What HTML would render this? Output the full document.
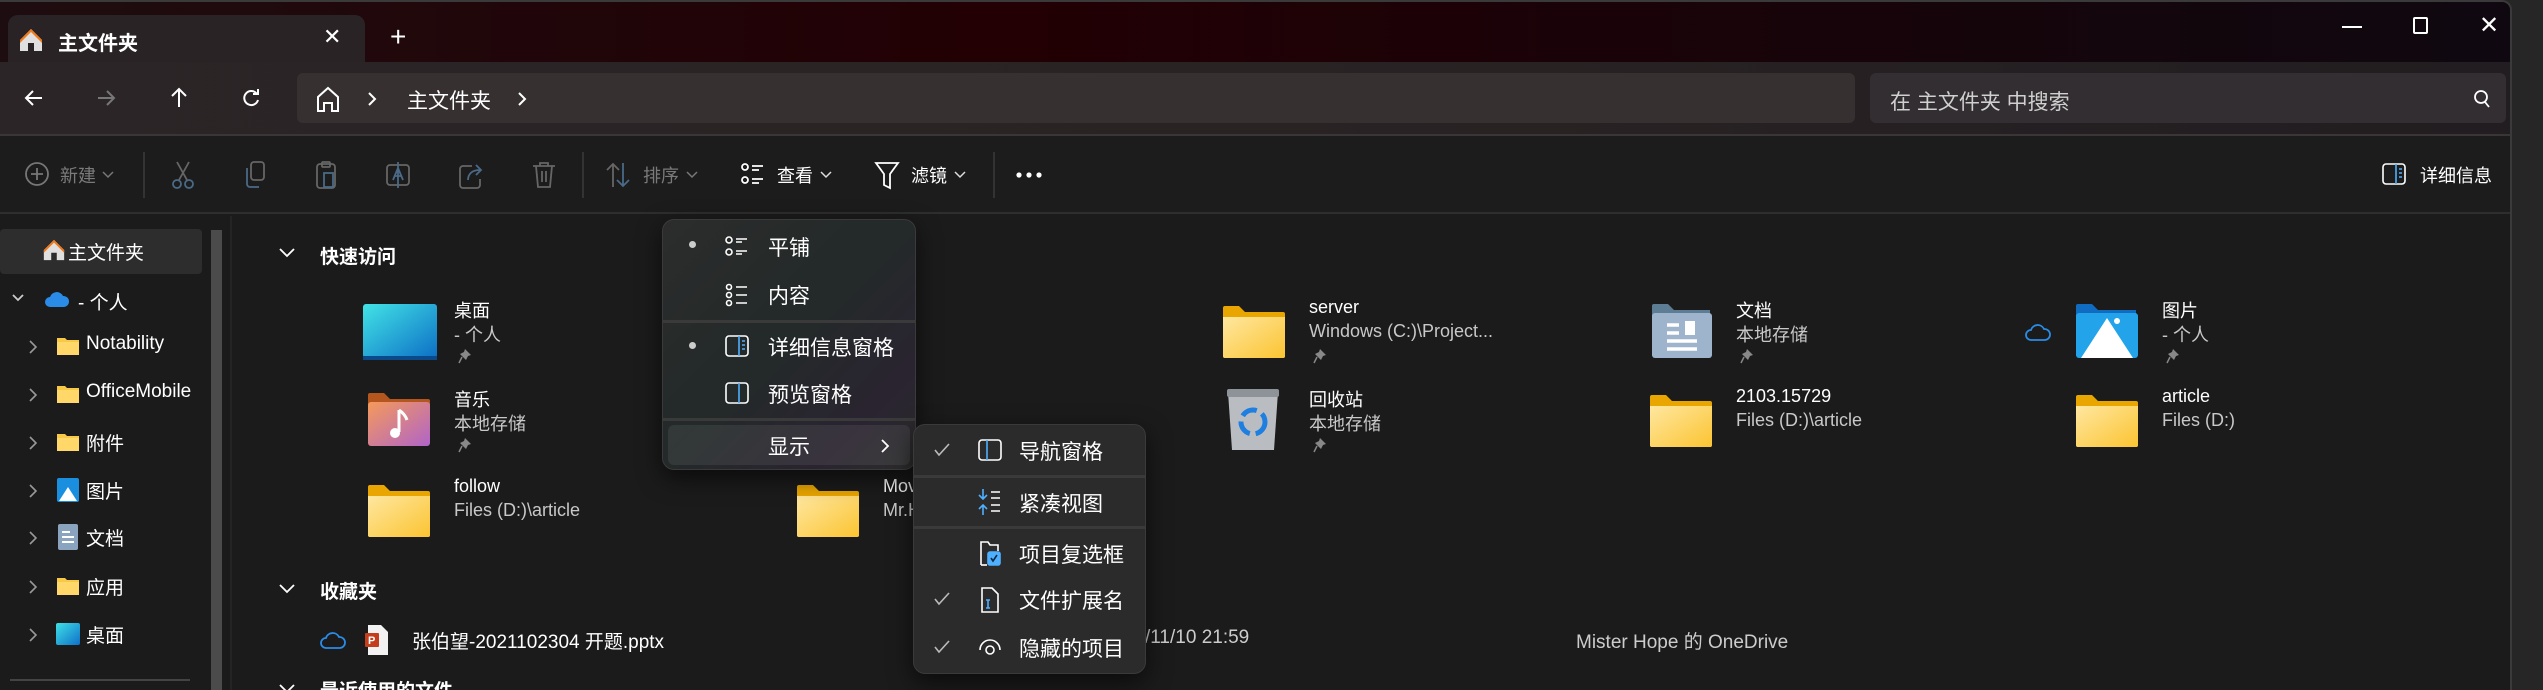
<!DOCTYPE html>
<html><head><meta charset="utf-8"><style>
*{margin:0;padding:0;box-sizing:border-box}
body{width:2543px;height:690px;overflow:hidden;background:#262626;font-family:"Liberation Sans","Noto Sans CJK SC",sans-serif;color:#fff;position:relative}
.a{position:absolute;white-space:nowrap}
#win{position:absolute;left:0;top:0;width:2512px;height:690px;background:#1b1b1b;overflow:hidden;border-right:2px solid #3a3a3a;border-top:2px solid #3a3a3a;border-top-right-radius:10px}
#title{position:absolute;left:0;top:0;width:100%;height:60px;background:linear-gradient(90deg,#1e0d10,#220004 40%,#14050b 80%,#100810)}
#tab{left:8px;top:13px;width:357px;height:50px;background:#2a2325;border-radius:10px 10px 0 0}
#nav{position:absolute;left:0;top:60px;width:100%;height:72px;background:linear-gradient(90deg,#2b2527,#2a2324 50%,#211d20)}
#addr{left:297px;top:71px;width:1558px;height:50px;background:#363031;border-radius:6px}
#search{left:1870px;top:71px;width:636px;height:50px;background:#332e31;border-radius:6px}
#tool{position:absolute;left:0;top:132px;width:100%;height:80px;background:#1c1c1c;border-top:2px solid #3a3536;border-bottom:2px solid #2e2e2e}
.s{font-size:18px;color:#cfcfcf}
.sep{position:absolute;width:2px;background:#333;top:150px;height:46px}
.sb{position:absolute;left:20px;font-size:19px;color:#fff}
.menu{position:absolute;background:linear-gradient(135deg,#2c2c2c 0%,#232a29 45%,#2a2430 80%,#2c2c2c);border:1.5px solid #3a3a3a;border-radius:12px;box-shadow:0 8px 24px rgba(0,0,0,.6)}
.mi{position:absolute;font-size:21px;color:#fff}
.ms{position:absolute;left:0;right:0;height:3px;background:#3a3a3a}
</style></head><body>
<div id="win">
<div id="title"></div>
<div class="a" id="tab"></div>
<svg class="a" style="left:18px;top:25px" width="26" height="26" viewBox="0 0 26 26"><path d="M13 2L2 13v11h8v-8h6v8h8V13z" fill="#e0e0e0"/><path d="M13 2L2 13v3L13 5l11 11v-3z" fill="#f07a1a"/></svg>
<div class="a" style="left:58px;top:25px;font-size:20px;font-weight:bold">主文件夹</div>
<div class="a" style="left:323px;top:22px;font-size:22px">✕</div>
<div class="a" style="left:390px;top:19px;font-size:28px;font-weight:300">+</div>
<div class="a" style="left:2342px;top:24px;width:20px;height:2px;background:#fff"></div>
<div class="a" style="left:2413px;top:15px;width:15px;height:17px;border:2px solid #fff;border-radius:2px"></div>
<div class="a" style="left:2479px;top:9px;font-size:24px">✕</div>

<div id="nav"></div>
<div class="a" id="addr"></div>
<div class="a" id="search"></div>
<svg class="a" style="left:22px;top:84px" width="24" height="24" viewBox="0 0 24 24" fill="none" stroke="#fff" stroke-width="2"><path d="M20 12H4M11 5l-7 7 7 7"/></svg>
<svg class="a" style="left:94px;top:84px" width="24" height="24" viewBox="0 0 24 24" fill="none" stroke="#777" stroke-width="2"><path d="M4 12h16M13 5l7 7-7 7"/></svg>
<svg class="a" style="left:167px;top:84px" width="24" height="24" viewBox="0 0 24 24" fill="none" stroke="#fff" stroke-width="2"><path d="M12 21V3M5 10l7-7 7 7"/></svg>
<svg class="a" style="left:239px;top:84px" width="24" height="24" viewBox="0 0 24 24" fill="none" stroke="#fff" stroke-width="2"><path d="M18 8A7 7 0 1 0 19 14"/><path d="M19 3v5h-5"/></svg>
<svg class="a" style="left:315px;top:83px" width="26" height="28" viewBox="0 0 26 28" fill="none" stroke="#fff" stroke-width="2"><path d="M3 26V12L13 3l10 9v14h-6v-8h-8v8z"/></svg>
<svg class="a" style="left:367px;top:89px" width="10" height="16" viewBox="0 0 10 16" fill="none" stroke="#fff" stroke-width="2"><path d="M2 2l6 6-6 6"/></svg>
<div class="a" style="left:407px;top:83px;font-size:21px">主文件夹</div>
<svg class="a" style="left:517px;top:89px" width="10" height="16" viewBox="0 0 10 16" fill="none" stroke="#fff" stroke-width="2"><path d="M2 2l6 6-6 6"/></svg>
<div class="a" style="left:1890px;top:84px;font-size:21px;color:#d0d0d0">在 主文件夹 中搜索</div>
<svg class="a" style="left:2473px;top:87px" width="18" height="20" viewBox="0 0 18 20" fill="none" stroke="#fff" stroke-width="1.8"><circle cx="8" cy="8" r="6"/><path d="M12 13l4 5"/></svg>

<div id="tool"></div>
<svg class="a" style="left:24px;top:159px" width="26" height="26" viewBox="0 0 26 26" fill="none" stroke="#777" stroke-width="1.8"><circle cx="13" cy="13" r="11"/><path d="M13 7v12M7 13h12"/></svg>
<div class="a s" style="left:60px;top:160px;color:#7a7a7a">新建</div>
<svg class="a" style="left:102px;top:169px" width="12" height="8" viewBox="0 0 12 8" fill="none" stroke="#777" stroke-width="1.5"><path d="M1 1l5 5 5-5"/></svg>
<div class="sep" style="left:143px"></div>
<div class="sep" style="left:582px"></div>
<div class="sep" style="left:993px"></div>
<svg class="a" style="left:171px;top:158px" width="24" height="30" viewBox="0 0 24 30" fill="none" stroke="#4a6a88" stroke-width="1.8"><circle cx="6" cy="24" r="4"/><circle cx="18" cy="24" r="4"/><path d="M8 20L18 2M16 20L6 2" stroke="#666"/></svg>
<svg class="a" style="left:243px;top:158px" width="24" height="30" viewBox="0 0 24 30" fill="none" stroke="#666" stroke-width="1.8"><rect x="8" y="2" width="13" height="18" rx="3"/><path d="M4 8v16a3 3 0 0 0 3 3h9" stroke="#4a6a88"/></svg>
<svg class="a" style="left:314px;top:158px" width="24" height="30" viewBox="0 0 24 30" fill="none" stroke="#666" stroke-width="1.8"><rect x="3" y="4" width="18" height="24" rx="3"/><rect x="8" y="2" width="8" height="5" rx="1"/><rect x="10" y="13" width="9" height="14" stroke="#4a6a88"/></svg>
<svg class="a" style="left:385px;top:158px" width="26" height="30" viewBox="0 0 26 30" fill="none" stroke="#666" stroke-width="1.8"><rect x="2" y="5" width="22" height="20" rx="3"/><path d="M8 20l5-12 5 12M10 16h6M13 2v26" stroke="#4a6a88"/></svg>
<svg class="a" style="left:458px;top:158px" width="26" height="30" viewBox="0 0 26 30" fill="none" stroke="#666" stroke-width="1.8"><path d="M14 6H5a3 3 0 0 0-3 3v16a3 3 0 0 0 3 3h14a3 3 0 0 0 3-3v-6"/><path d="M10 20c0-6 4-10 12-10M18 5l5 5-5 5" stroke="#4a6a88"/></svg>
<svg class="a" style="left:531px;top:158px" width="26" height="30" viewBox="0 0 26 30" fill="none" stroke="#666" stroke-width="1.8"><path d="M2 6h22M9 6V3h8v3M5 6l2 21h12l2-21M11 11v11M15 11v11"/></svg>
<svg class="a" style="left:604px;top:159px" width="28" height="28" viewBox="0 0 28 28" fill="none" stroke="#666" stroke-width="1.8"><path d="M9 26V3M3 9l6-6 6 6"/><path d="M19 2v23M13 19l6 6 6-6" stroke="#4a6a88"/></svg>
<div class="a s" style="left:643px;top:160px;color:#7a7a7a">排序</div>
<svg class="a" style="left:686px;top:169px" width="12" height="8" viewBox="0 0 12 8" fill="none" stroke="#777" stroke-width="1.5"><path d="M1 1l5 5 5-5"/></svg>
<svg class="a" style="left:741px;top:160px" width="24" height="24" viewBox="0 0 24 24" fill="none" stroke="#fff" stroke-width="1.8"><circle cx="4" cy="5" r="3"/><circle cx="4" cy="18" r="3"/><path d="M11 4h11M11 8h7M11 17h11M11 21h7"/></svg>
<div class="a s" style="left:777px;top:160px;color:#fff">查看</div>
<svg class="a" style="left:820px;top:169px" width="12" height="8" viewBox="0 0 12 8" fill="none" stroke="#ddd" stroke-width="1.5"><path d="M1 1l5 5 5-5"/></svg>
<svg class="a" style="left:874px;top:158px" width="26" height="30" viewBox="0 0 26 30" fill="none" stroke="#fff" stroke-width="1.8"><path d="M2 3h22l-8 11v14l-6-3V14z"/></svg>
<div class="a s" style="left:911px;top:160px;color:#fff">滤镜</div>
<svg class="a" style="left:954px;top:169px" width="12" height="8" viewBox="0 0 12 8" fill="none" stroke="#ddd" stroke-width="1.5"><path d="M1 1l5 5 5-5"/></svg>
<svg class="a" style="left:1016px;top:170px" width="26" height="6"><circle cx="3" cy="3" r="2.6" fill="#fff"/><circle cx="13" cy="3" r="2.6" fill="#fff"/><circle cx="23" cy="3" r="2.6" fill="#fff"/></svg>
<svg class="a" style="left:2382px;top:161px" width="24" height="22" viewBox="0 0 24 22" fill="none" stroke="#fff" stroke-width="1.6"><rect x="1" y="1" width="22" height="20" rx="3"/><path d="M14 1v20" stroke="#4fb0ff"/><path d="M17 6h3M17 10h3M17 14h3" stroke="#4fb0ff"/></svg>
<div class="a s" style="left:2420px;top:160px;color:#fff">详细信息</div>

<!-- sidebar -->
<div class="a" style="left:0;top:227px;width:202px;height:45px;background:#2d2d2d;border-radius:4px"></div>
<div class="a" style="left:211px;top:228px;width:11px;height:462px;background:#4b4b4b"></div>
<div class="a" style="left:230px;top:214px;width:2px;height:476px;background:#242424"></div>
<svg class="a" style="left:42px;top:236px" width="24" height="24" viewBox="0 0 26 26"><path d="M13 2L2 13v11h8v-8h6v8h8V13z" fill="#e0e0e0"/><path d="M13 2L2 13v3L13 5l11 11v-3z" fill="#f07a1a"/></svg>
<div class="a" style="left:68px;top:236px;font-size:19px">主文件夹</div>
<svg class="a" style="left:12px;top:292px" width="12" height="8" viewBox="0 0 12 8" fill="none" stroke="#ccc" stroke-width="1.8"><path d="M1 1l5 5 5-5"/></svg>
<svg class="a" style="left:44px;top:287px" width="26" height="20" viewBox="0 0 26 20"><path d="M6 18a5 5 0 0 1 0-10 7 7 0 0 1 13-1 5.5 5.5 0 0 1 1 11z" fill="#2a8ce6"/></svg>
<div class="a" style="left:78px;top:286px;font-size:19px">- 个人</div>
<div id="sideitems"></div>
<div class="a" style="left:10px;top:677px;width:180px;height:2px;background:#444"></div>

<!-- content -->
<svg class="a" style="left:279px;top:246px" width="16" height="10" viewBox="0 0 16 10" fill="none" stroke="#fff" stroke-width="1.8"><path d="M1 1l7 7 7-7"/></svg>
<div class="a" style="left:320px;top:240px;font-size:19px;font-weight:bold">快速访问</div>
<svg class="a" style="left:279px;top:582px" width="16" height="10" viewBox="0 0 16 10" fill="none" stroke="#fff" stroke-width="1.8"><path d="M1 1l7 7 7-7"/></svg>
<div class="a" style="left:320px;top:575px;font-size:19px;font-weight:bold">收藏夹</div>
<svg class="a" style="left:279px;top:682px" width="16" height="10" viewBox="0 0 16 10" fill="none" stroke="#fff" stroke-width="1.8"><path d="M1 1l7 7 7-7"/></svg>
<div class="a" style="left:320px;top:674px;font-size:19px;font-weight:bold">最近使用的文件</div>
<svg class="a" style="left:320px;top:628px" width="26" height="20" viewBox="0 0 26 20" fill="none" stroke="#2a8ce6" stroke-width="1.8"><path d="M6 18a5 5 0 0 1 0-10 7 7 0 0 1 13-1 5.5 5.5 0 0 1 1 11z"/></svg>
<svg class="a" style="left:364px;top:622px" width="26" height="32" viewBox="0 0 26 32"><path d="M4 1h13l7 7v23H4z" fill="#f2f2f2"/><rect x="1" y="9" width="14" height="14" rx="1" fill="#c43e1c"/><text x="4" y="20" font-size="11" fill="#fff" font-family="Liberation Sans" font-weight="bold">P</text></svg>
<div class="a" style="left:412px;top:625px;font-size:19px">张伯望-2021102304 开题.pptx</div>
<div class="a" style="left:1145px;top:625px;font-size:19px;color:#ccc">/11/10 21:59</div>
<div class="a" style="left:1576px;top:625px;font-size:19px;color:#ccc">Mister Hope  的 OneDrive</div>

<div id="grid"></div>

<!-- menu 1 -->
<div class="menu" style="left:662px;top:217px;width:254px;height:251px"></div>
<div class="a" style="left:668px;top:423px;width:242px;height:40px;background:rgba(255,255,255,.07);border-radius:6px"></div>
<div class="ms" style="left:662px;width:254px;top:318px;right:auto"></div>
<div class="ms" style="left:662px;width:254px;top:416px;right:auto"></div>
<div class="a" style="left:689px;top:239px;width:7px;height:7px;border-radius:50%;background:#ccc"></div>
<div class="a" style="left:689px;top:340px;width:7px;height:7px;border-radius:50%;background:#ccc"></div>
<svg class="a" style="left:725px;top:233px" width="24" height="22" viewBox="0 0 24 22" fill="none" stroke="#fff" stroke-width="1.6"><circle cx="4" cy="5" r="3"/><circle cx="4" cy="17" r="3"/><path d="M11 4h11M11 7h6M11 16h11M11 19h6"/></svg>
<svg class="a" style="left:725px;top:281px" width="24" height="24" viewBox="0 0 24 24" fill="none" stroke="#fff" stroke-width="1.6"><circle cx="4" cy="4" r="2.5"/><circle cx="4" cy="12" r="2.5"/><circle cx="4" cy="20" r="2.5"/><path d="M11 4h11M11 12h11M11 20h11"/></svg>
<svg class="a" style="left:725px;top:333px" width="24" height="22" viewBox="0 0 24 22" fill="none" stroke="#fff" stroke-width="1.6"><rect x="1" y="1" width="22" height="20" rx="3"/><path d="M14 1v20" stroke="#4fb0ff"/><path d="M17 6h3M17 10h3M17 14h3" stroke="#4fb0ff"/></svg>
<svg class="a" style="left:725px;top:380px" width="24" height="22" viewBox="0 0 24 22" fill="none" stroke="#fff" stroke-width="1.6"><rect x="1" y="1" width="22" height="20" rx="3"/><path d="M14 1v20" stroke="#4fb0ff"/></svg>
<div class="mi" style="left:768px;top:230px">平铺</div>
<div class="mi" style="left:768px;top:278px">内容</div>
<div class="mi" style="left:768px;top:330px">详细信息窗格</div>
<div class="mi" style="left:768px;top:377px">预览窗格</div>
<div class="mi" style="left:768px;top:429px">显示</div>
<svg class="a" style="left:880px;top:436px" width="10" height="16" viewBox="0 0 10 16" fill="none" stroke="#fff" stroke-width="1.8"><path d="M2 2l6 6-6 6"/></svg>

<!-- menu 2 -->
<div class="menu" style="left:913px;top:422px;width:233px;height:250px;background:#2b2b2b"></div>
<div class="ms" style="left:913px;width:233px;top:473px;right:auto"></div>
<div class="ms" style="left:913px;width:233px;top:524px;right:auto"></div>
<svg class="a" style="left:934px;top:441px" width="16" height="14" viewBox="0 0 16 14" fill="none" stroke="#bbb" stroke-width="1.6"><path d="M1 7l4 5 10-11"/></svg>
<svg class="a" style="left:934px;top:590px" width="16" height="14" viewBox="0 0 16 14" fill="none" stroke="#bbb" stroke-width="1.6"><path d="M1 7l4 5 10-11"/></svg>
<svg class="a" style="left:934px;top:638px" width="16" height="14" viewBox="0 0 16 14" fill="none" stroke="#bbb" stroke-width="1.6"><path d="M1 7l4 5 10-11"/></svg>
<svg class="a" style="left:978px;top:437px" width="24" height="22" viewBox="0 0 24 22" fill="none" stroke="#fff" stroke-width="1.6"><rect x="1" y="1" width="22" height="20" rx="3"/><path d="M9 1v20" stroke="#4fb0ff"/></svg>
<svg class="a" style="left:978px;top:486px" width="24" height="28" viewBox="0 0 24 28" fill="none" stroke-width="1.6"><path d="M5 1v10M1 7l4 4 4-4M5 27V17M1 21l4-4 4 4" stroke="#4fb0ff"/><path d="M13 4h9M13 10h9M13 17h9M13 23h9" stroke="#fff"/></svg>
<svg class="a" style="left:978px;top:537px" width="24" height="28" viewBox="0 0 24 28" fill="none" stroke="#fff" stroke-width="1.6"><path d="M3 26V3h7l2 3h8v6"/><path d="M3 26h6"/><rect x="10" y="13" width="12" height="13" rx="2" fill="#4fb0ff" stroke="#4fb0ff"/><path d="M13 19l2 3 4-6" stroke="#0b2a44"/></svg>
<svg class="a" style="left:980px;top:584px" width="20" height="28" viewBox="0 0 20 28" fill="none" stroke="#fff" stroke-width="1.6"><path d="M2 2h10l6 6v18H2z"/><path d="M8 14v8M6 14h4M6 22h4" stroke="#4fb0ff"/></svg>
<svg class="a" style="left:978px;top:633px" width="24" height="22" viewBox="0 0 24 22" fill="none" stroke="#fff" stroke-width="1.6"><path d="M2 15a10 10 0 0 1 20 0"/><circle cx="12" cy="15" r="4"/></svg>
<div class="mi" style="left:1019px;top:434px">导航窗格</div>
<div class="mi" style="left:1019px;top:486px">紧凑视图</div>
<div class="mi" style="left:1019px;top:537px">项目复选框</div>
<div class="mi" style="left:1019px;top:583px">文件扩展名</div>
<div class="mi" style="left:1019px;top:631px">隐藏的项目</div>
</div>
<script>
var S=[["Notability",344,"f"],["OfficeMobile",392,"f"],["附件",440,"f"],["图片",488,"p"],["文档",535,"d"],["应用",584,"f"],["桌面",632,"k"]];
var h="";
S.forEach(function(s){
h+='<svg class="a" style="left:29px;top:'+(s[1]-6)+'px" width="8" height="14" viewBox="0 0 8 14" fill="none" stroke="#999" stroke-width="1.6"><path d="M1 1l6 6-6 6"/></svg>';
var ic='';
if(s[2]=="f")ic='<svg class="a" style="left:56px;top:'+(s[1]-10)+'px" width="24" height="20" viewBox="0 0 24 20"><path d="M1 2h8l2 2h12v15H1z" fill="#f7c948"/><path d="M1 6h22v13H1z" fill="#ffd869"/></svg>';
if(s[2]=="p")ic='<svg class="a" style="left:57px;top:'+(s[1]-12)+'px" width="22" height="24" viewBox="0 0 22 24"><rect width="22" height="24" rx="2" fill="#1a8fe0"/><path d="M2 23l9-14 9 14z" fill="#fff"/></svg>';
if(s[2]=="d")ic='<svg class="a" style="left:58px;top:'+(s[1]-13)+'px" width="20" height="26" viewBox="0 0 20 26"><rect width="20" height="26" rx="2" fill="#8aa4c0"/><path d="M4 8h8M4 13h12M4 18h12" stroke="#fff" stroke-width="2"/></svg>';
if(s[2]=="k")ic='<svg class="a" style="left:56px;top:'+(s[1]-11)+'px" width="24" height="22" viewBox="0 0 24 22"><defs><linearGradient id="kg" x1="0" y1="0" x2="1" y2="1"><stop offset="0" stop-color="#3ee0e6"/><stop offset="1" stop-color="#0f70c8"/></linearGradient></defs><rect width="24" height="22" rx="2" fill="url(#kg)"/></svg>';
h+=ic+'<div class="sb" style="left:86px;top:'+(s[1]-13)+'px">'+s[0]+'</div>';
});
document.getElementById("sideitems").outerHTML=h;
function folder(x,y){return '<svg class="a" style="left:'+x+'px;top:'+y+'px" width="64" height="54" viewBox="0 0 64 54"><defs><linearGradient id="fg" x1="0" y1="0" x2="1" y2="1"><stop offset="0" stop-color="#ffe7a0"/><stop offset="1" stop-color="#fbc431"/></linearGradient></defs><path d="M1 3a2 2 0 0 1 2-2h14l6 6h38a2 2 0 0 1 2 2v42a2 2 0 0 1-2 2H3a2 2 0 0 1-2-2z" fill="#e9a600"/><path d="M1 12h62v39a2 2 0 0 1-2 2H3a2 2 0 0 1-2-2z" fill="url(#fg)"/></svg>';}
var cols=[363,792,1218,1645,2071],rows=[329,418,508];
var G=[
[0,0,"desk","桌面"," - 个人",1],[2,0,"f","server","Windows (C:)\\Project...",1],[3,0,"doc","文档","本地存储",1],[4,0,"pic","图片"," - 个人",1],
[0,1,"mus","音乐","本地存储",1],[2,1,"bin","回收站","本地存储",1],[3,1,"f","2103.15729","Files (D:)\\article",0],[4,1,"f","article","Files (D:)",0],
[0,2,"f","follow","Files (D:)\\article",0],[1,2,"f","Mov","Mr.H",0]];
var g="";
G.forEach(function(it){var x=cols[it[0]],y=rows[it[1]],tx=x+91;
var ic="";
if(it[2]=="f")ic=folder(x+4,y-26);
if(it[2]=="desk")ic='<svg class="a" style="left:'+x+'px;top:'+(y-27)+'px" width="76" height="56" viewBox="0 0 76 56"><defs><linearGradient id="dg" x1="0" y1="0" x2="1" y2="1"><stop offset="0" stop-color="#42e3e6"/><stop offset="1" stop-color="#0d6fc6"/></linearGradient></defs><rect width="74" height="54" rx="3" fill="url(#dg)"/><rect y="52" width="74" height="4" fill="#0a4a8a"/></svg>';
if(it[2]=="mus")ic='<svg class="a" style="left:'+(x+4)+'px;top:'+(y-28)+'px" width="64" height="56" viewBox="0 0 64 56"><defs><linearGradient id="mg" x1="0" y1="0" x2="1" y2="1"><stop offset="0" stop-color="#f59a5a"/><stop offset="1" stop-color="#b064c8"/></linearGradient></defs><path d="M1 3a2 2 0 0 1 2-2h14l6 6h38a2 2 0 0 1 2 2v42H1z" fill="#b5561e"/><rect x="1" y="10" width="62" height="44" rx="3" fill="url(#mg)"/><path d="M32 18v22" stroke="#fff" stroke-width="3"/><circle cx="28" cy="41" r="5" fill="#fff"/><path d="M32 18q6 4 8 10" stroke="#fff" stroke-width="3" fill="none"/></svg>';
if(it[2]=="doc")ic='<svg class="a" style="left:'+(x+6)+'px;top:'+(y-28)+'px" width="62" height="56" viewBox="0 0 62 56"><path d="M1 3a2 2 0 0 1 2-2h14l6 6h36v46H1z" fill="#5d7d95"/><rect x="1" y="10" width="60" height="45" rx="3" fill="#9db4cc"/><path d="M16 22h12M16 30h12M16 38h30M16 46h30" stroke="#fff" stroke-width="3.5"/><rect x="34" y="18" width="10" height="14" fill="#fff"/></svg>';
if(it[2]=="pic")ic='<svg class="a" style="left:'+(x+4)+'px;top:'+(y-28)+'px" width="64" height="56" viewBox="0 0 64 56"><path d="M1 3a2 2 0 0 1 2-2h14l6 6h38v46H1z" fill="#0f6cc0"/><rect x="1" y="10" width="62" height="45" rx="3" fill="#22a3ea"/><path d="M6 55l26-40 26 40z" fill="#fff"/><circle cx="42" cy="18" r="3" fill="#fff"/></svg>';
if(it[2]=="bin")ic='<svg class="a" style="left:'+(x+8)+'px;top:'+(y-32)+'px" width="54" height="64" viewBox="0 0 54 64"><path d="M2 4h50l-4 58H6z" fill="#b9bdc2"/><rect x="1" y="1" width="52" height="8" rx="2" fill="#8e9399"/><circle cx="27" cy="34" r="12" fill="none" stroke="#1e7fe0" stroke-width="5" stroke-dasharray="16 6"/></svg>';
g+=ic;
if(it[0]==4&&it[1]==0)g+='<svg class="a" style="left:2025px;top:320px" width="26" height="20" viewBox="0 0 26 20" fill="none" stroke="#2a8ce6" stroke-width="1.8"><path d="M6 18a5 5 0 0 1 0-10 7 7 0 0 1 13-1 5.5 5.5 0 0 1 1 11z"/></svg>';
g+='<div class="a" style="left:'+tx+'px;top:'+(y-34)+'px;font-size:18px;color:#fff">'+it[3]+'</div>';
g+='<div class="a" style="left:'+tx+'px;top:'+(y-10)+'px;font-size:18px;color:#c8c8c8">'+it[4]+'</div>';
if(it[5])g+='<svg class="a" style="left:'+(tx+4)+'px;top:'+(y+17)+'px" width="14" height="16" viewBox="0 0 14 16"><path d="M7 1l6 6-3 1-2 4-6-6 4-2z" fill="#888"/><path d="M4 9l-3 6" stroke="#888" stroke-width="1.5"/></svg>';
});
var d=document.createElement("div");d.innerHTML=g;
var w=document.getElementById("win");var m=w.querySelector(".menu");
while(d.firstChild)w.insertBefore(d.firstChild,m);
</script>
</body></html>
